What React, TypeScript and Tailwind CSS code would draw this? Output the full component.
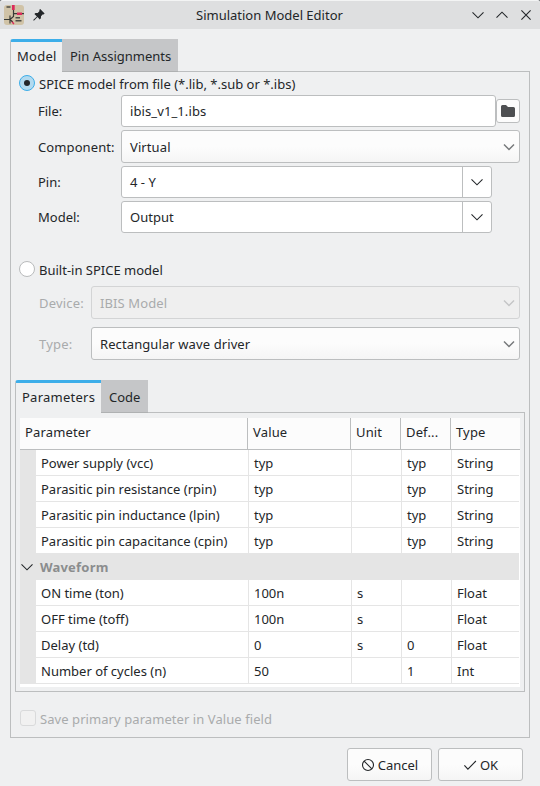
import type { ReactNode } from 'react';

function Chevron({ className = '', up = false }: { className?: string; up?: boolean }) {
  return (
    <svg width="14" height="14" viewBox="0 0 14 14" fill="none" className={className}>
      <path d={up ? 'M1.5 9.7 7 4.2l5.5 5.5' : 'M1.5 4.3 7 9.8l5.5-5.5'} stroke="currentColor" strokeWidth="1.1" />
    </svg>
  );
}

function AppIcon() {
  return (
    <svg width="20" height="20" viewBox="0 0 20 20">
      <rect width="20" height="20" rx="3" fill="#d0c3a7" />
      <path d="M8 0h2.700v5H8zM13 7.500h5v2.500h-5z" fill="#dc2a5c" />
      <path d="m7.800 16.200 2 3" stroke="#dc2a5c" strokeWidth="1.5" />
      <path d="M9.500 5v6.500L6 14.500M9.500 8.700H13M18 8.700h2M0 14.500h6M6 10.500v8M6.500 15l2 1.700" stroke="#393b36" strokeWidth="1.2" fill="none" />
      <path d="M2.500 2h4M11.500 12.800h4.500M11.500 15.800h6" stroke="#4c4c45" strokeWidth="1.500" fill="none" />
    </svg>
  );
}

function PinIcon() {
  return (
    <svg width="12" height="12" viewBox="0 0 12 12" fill="#232629">
      <path d="M7.200.1 11.600 4.500 10.700 5.500 9.900 5.300 8 7.200 7.900 9.300 6.800 10.400 4.500 8.100.9 11.700.2 11.100 3.900 7.400 1.400 5 2.500 3.900 4.700 3.900 6.600 2 6.200 1.100Z" />
    </svg>
  );
}

function TitleBar() {
  return (
    <header className="flex h-[29px] shrink-0 items-center rounded-t-[3px] border-t border-[#f3f4f4] bg-[#dedfe0]">
      <div className="flex w-[196px] items-center gap-[9px] pb-px pl-1">
        <AppIcon />
        <PinIcon />
      </div>
      <h1 className="pb-px text-[13px]">Simulation Model Editor</h1>
      <div className="ml-auto flex gap-2.5 pb-px pr-[7px]">
        <Chevron />
        <Chevron up />
        <svg width="14" height="14" viewBox="0 0 14 14" stroke="currentColor" strokeWidth="1.1">
          <path d="m2.4 2.400 9.200 9.200m0-9.200-9.200 9.200" />
        </svg>
      </div>
    </header>
  );
}

function ActiveTab({ children, className }: { children: ReactNode; className: string }) {
  return (
    <div className={`z-10 flex items-center rounded-tl-[3px] border-l border-t-[3px] border-l-[#bcbebf] border-t-[#3daee9] bg-[#eff0f1] pb-0.5 pl-1.5 tracking-[0.25px] ${className}`}>
      {children}
    </div>
  );
}

function IdleTab({ children, className }: { children: ReactNode; className: string }) {
  return <div className={`z-10 flex items-center border-b border-[#afb1b2] bg-[#c5c6c8] pl-2 pt-0.5 ${className}`}>{children}</div>;
}

function Radio({ checked, children }: { checked?: boolean; children: ReactNode }) {
  return (
    <div className="flex h-4 items-center gap-1">
      <span
        className={`flex size-4 items-center justify-center rounded-full border ${
          checked ? 'border-[#3daee9] bg-[#b2daef]' : 'border-[#b9bbbc] bg-white'
        }`}
      >
        {checked && <span className="size-[6px] rounded-full bg-[#232629]" />}
      </span>
      <span className="pt-[2px]">{children}</span>
    </div>
  );
}

function Choice({ value, disabled }: { value: string; disabled?: boolean }) {
  return (
    <div
      className={`flex h-[33px] flex-1 items-center justify-between rounded-[3px] border pl-2 pr-[3px] ${
        disabled ? 'border-[#d3d4d5] bg-[#efefef] text-[#a9abac]' : 'border-[#bcbebf] bg-linear-to-b from-[#fcfcfc] from-50% to-[#f5f5f5]'
      }`}
    >
      <span className="pt-px tracking-[0.1px]">{value}</span>
      <svg width="14" height="14" viewBox="0 0 14 14" fill="none" className={disabled ? 'text-[#c4c5c6]' : 'text-[#77797b]'}>
        <path d="m2 4.500 5 5 5-5" stroke="currentColor" strokeWidth="1.5" />
      </svg>
    </div>
  );
}

function Combo({ value }: { value: string }) {
  return (
    <div className="flex h-8 w-[371px] rounded-[3px] border border-[#bcbebf] bg-white">
      <span className="flex flex-1 items-center pl-2">{value}</span>
      <span className="flex w-[29px] items-center justify-center border-l border-[#bcbebf]">
        <Chevron />
      </span>
    </div>
  );
}

const columns = 'grid grid-cols-[212px_103px_50px_50px_68px]';

function Row({ cells }: { cells: string[] }) {
  return (
    <div className={`${columns} h-[26px] border-b border-[#e5e5e5]`}>
      {cells.map((cell, i) => (
        <div key={i} className={`flex items-center pl-[5px] pt-px ${i ? 'border-l border-[#e5e5e5]' : ''}`}>
          {cell}
        </div>
      ))}
    </div>
  );
}

const modelRows = [
  ['Power supply (vcc)', 'typ', '', 'typ', 'String'],
  ['Parasitic pin resistance (rpin)', 'typ', '', 'typ', 'String'],
  ['Parasitic pin inductance (lpin)', 'typ', '', 'typ', 'String'],
  ['Parasitic pin capacitance (cpin)', 'typ', '', 'typ', 'String'],
];

const waveRows = [
  ['ON time (ton)', '100n', 's', '', 'Float'],
  ['OFF time (toff)', '100n', 's', '', 'Float'],
  ['Delay (td)', '0', 's', '0', 'Float'],
  ['Number of cycles (n)', '50', '', '1', 'Int'],
];

function ParameterTable() {
  return (
    <div className="h-[269px] w-[500px] bg-white">
      <div className="grid h-8 grid-cols-[227px_103px_50px_50px_70px] border-b border-[#bcbebf] bg-[#fcfcfc]">
        {['Parameter', 'Value', 'Unit', 'Def...', 'Type'].map((title, i) => (
          <div key={title} className={`flex items-center pb-[3px] pl-[5px] tracking-[0.15px] ${i ? 'border-l border-[#bcbebf]' : ''}`}>
            {title}
          </div>
        ))}
      </div>
      <div className="w-[499px] bg-[#e5e5e5] pl-4">
        <div className="bg-white">
          {modelRows.map((cells) => <Row key={cells[0]} cells={cells} />)}
        </div>
      </div>
      <div className="flex h-[26px] w-[499px] items-center bg-[#e5e5e5] font-bold tracking-[0.2px] text-[#8b8d8e]">
        <Chevron className="mr-[5px] text-[#232629]" />
        <span className="pl-px">Waveform</span>
      </div>
      <div className="w-[499px] bg-[#e5e5e5] pl-4">
        <div className="bg-white">
          {waveRows.map((cells) => <Row key={cells[0]} cells={cells} />)}
        </div>
      </div>
    </div>
  );
}

function Button({ icon, label }: { icon: ReactNode; label: string }) {
  return (
    <button className="flex h-[33px] w-[85px] items-center justify-center gap-[3px] rounded-[3px] border border-[#bcbebf] bg-linear-to-b from-[#fcfcfc] from-50% to-[#f5f5f5]">
      {icon}
      <span className="pt-px">{label}</span>
    </button>
  );
}

export default function App() {
  return (
    <div className="bg-[#777a7c]">
      <div className="flex h-[786px] w-[540px] flex-col overflow-hidden whitespace-nowrap rounded-t-[3px] bg-[#eff0f1] font-['Noto_Sans',sans-serif] text-[13px] leading-[18px] text-[#232629]">
        <TitleBar />
        <div className="mt-2.5 flex h-[33px] pl-2.5">
          <ActiveTab className="w-[52px]">Model</ActiveTab>
          <IdleTab className="w-[116px]">Pin Assignments</IdleTab>
        </div>
        <main className="-mt-px ml-2.5 h-[667px] w-[520px] shrink-0 border border-[#bcbebf] pl-1">
          <section className="pl-1 pt-[3px]">
            <Radio checked>SPICE model from file (*.lib, *.sub or *.ibs)</Radio>
            <div className="mt-1 flex flex-col gap-[3px] pl-[19px]">
              <div className="flex items-center">
                <span className="w-[83px]">File:</span>
                <div className="flex h-8 w-[375px] items-center rounded-[3px] border border-[#bcbebf] bg-white pl-2 tracking-[0.1px]">ibis_v1_1.ibs</div>
                <div className="flex size-6 items-center justify-center rounded-[3px] border border-[#bcbebf] bg-[#fcfcfc]">
                  <svg width="16" height="16" viewBox="0 0 16 16" fill="#4d4f51">
                    <path d="M2.500 2H6l2 2h5.500Q15 4 15 5.500v7Q15 14 13.500 14h-11Q1 14 1 12.500v-9Q1 2 2.500 2Z" />
                  </svg>
                </div>
              </div>
              <div className="flex w-[482px] items-center">
                <span className="w-[83px] pt-px tracking-[0.1px]">Component:</span>
                <Choice value="Virtual" />
              </div>
              <div className="flex items-center">
                <span className="w-[83px]">Pin:</span>
                <Combo value="4 - Y" />
              </div>
              <div className="flex items-center">
                <span className="w-[83px]">Model:</span>
                <Combo value="Output" />
              </div>
            </div>
          </section>
          <section className="pl-1 pt-7">
            <Radio>Built-in SPICE model</Radio>
            <div className="mt-[9px] flex w-[501px] flex-col gap-2 pl-5">
              <div className="flex items-center">
                <span className="w-[52px] pt-px tracking-[0.2px] text-[#a9abac]">Device:</span>
                <Choice value="IBIS Model" disabled />
              </div>
              <div className="flex items-center">
                <span className="w-[52px] pt-px tracking-[0.2px] text-[#a9abac]">Type:</span>
                <Choice value="Rectangular wave driver" />
              </div>
            </div>
          </section>
          <section className="mt-5">
            <div className="flex h-[33px]">
              <ActiveTab className="w-[86px]">Parameters</ActiveTab>
              <IdleTab className="w-[47px]">Code</IdleTab>
            </div>
            <div className="-mt-px h-[280px] w-[510px] border border-[#bcbebf] pl-1 pt-[5px]">
              <ParameterTable />
            </div>
          </section>
          <div className="mt-[18px] flex h-4 items-center gap-1 pl-[5px] text-[#a9abac]">
            <span className="size-4 rounded-[3px] border border-[#d9dadb] bg-[#f1f1f1]" />
            <span className="pt-[2px] tracking-[0.07px]">Save primary parameter in Value field</span>
          </div>
        </main>
        <footer className="mt-2.5 flex justify-end gap-1.5 pr-[17px]">
          <Button
            label="Cancel"
            icon={
              <svg width="14" height="14" viewBox="0 0 14 14" fill="none" stroke="currentColor" strokeWidth="1.1">
                <circle cx="7" cy="7" r="5.500" />
                <path d="m3.100 3.100 7.800 7.800" />
              </svg>
            }
          />
          <Button
            label="OK"
            icon={
              <svg width="14" height="14" viewBox="0 0 14 14" fill="none" stroke="currentColor" strokeWidth="1.1">
                <path d="m1.400 7.300 3.500 3.900 8-8.200" />
              </svg>
            }
          />
        </footer>
      </div>
    </div>
  );
}
